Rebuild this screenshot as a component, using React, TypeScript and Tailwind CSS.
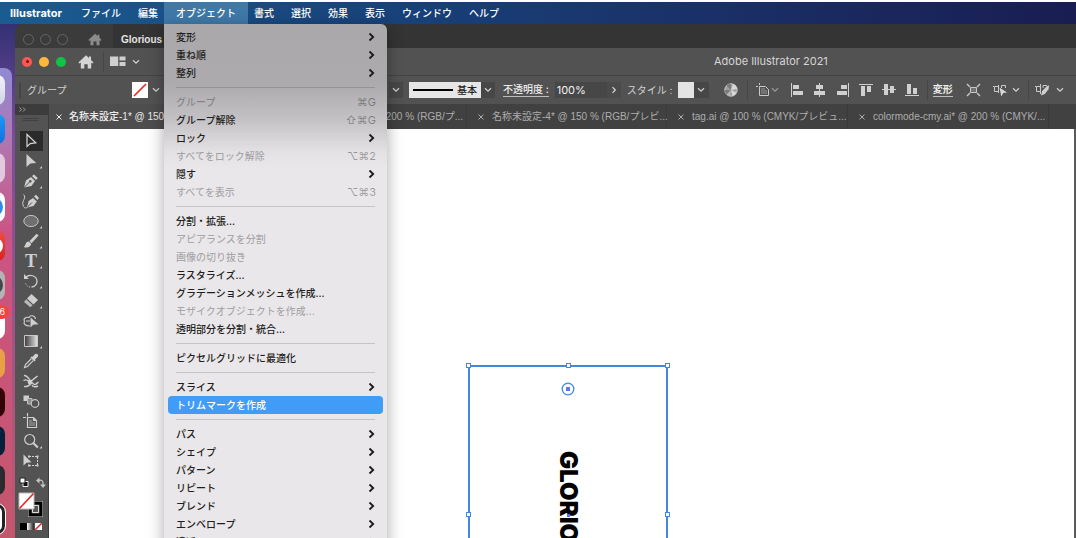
import type { ReactNode } from "react";
import clsx from "clsx";

type MenuEntry = {
  label: string;
  submenu?: boolean;
  disabled?: boolean;
  keys?: string;
  active?: boolean;
};

const menuBefore = ["ファイル", "編集"];
const menuAfter = ["書式", "選択", "効果", "表示", "ウィンドウ", "ヘルプ"];

const menuGroups: MenuEntry[][] = [
  [
    { label: "変形", submenu: true },
    { label: "重ね順", submenu: true },
    { label: "整列", submenu: true },
  ],
  [
    { label: "グループ", disabled: true, keys: "⌘G" },
    { label: "グループ解除", keys: "⇧⌘G" },
    { label: "ロック", submenu: true },
    { label: "すべてをロック解除", disabled: true, keys: "⌥⌘2" },
    { label: "隠す", submenu: true },
    { label: "すべてを表示", disabled: true, keys: "⌥⌘3" },
  ],
  [
    { label: "分割・拡張..." },
    { label: "アピアランスを分割", disabled: true },
    { label: "画像の切り抜き", disabled: true },
    { label: "ラスタライズ..." },
    { label: "グラデーションメッシュを作成..." },
    { label: "モザイクオブジェクトを作成...", disabled: true },
    { label: "透明部分を分割・統合..." },
  ],
  [{ label: "ピクセルグリッドに最適化" }],
  [
    { label: "スライス", submenu: true },
    { label: "トリムマークを作成", active: true },
  ],
  [
    { label: "パス", submenu: true },
    { label: "シェイプ", submenu: true },
    { label: "パターン", submenu: true },
    { label: "リピート", submenu: true },
    { label: "ブレンド", submenu: true },
    { label: "エンベロープ", submenu: true },
    { label: "遠近", submenu: true },
  ],
];

function ObjectMenu() {
  return (
    <div
      role="menu"
      className="absolute top-full left-0 z-20 w-[223px] rounded-tr-md bg-[linear-gradient(180deg,#aaa8aa_0px,#acaaac_60px,#c3c1c4_95px,#e3e1e4_128px,#e9e7ea_145px)] px-1 pt-1 font-medium text-[#1f1e20] shadow-[0_4px_16px_rgba(0,0,0,0.35)]"
    >
      {menuGroups.map((group, i) => (
        <div key={i}>
          {i > 0 && <hr className="mx-2 my-[5px] border-black/15" />}
          {group.map((item) => (
            <button
              key={item.label}
              role="menuitem"
              disabled={item.disabled}
              className={clsx(
                "flex h-[18px] w-full items-center justify-between rounded pr-[7px] pl-2 whitespace-nowrap",
                item.active && "bg-[#419cf8] text-white",
                item.disabled && "text-black/30"
              )}
            >
              <span>{item.label}</span>
              {item.keys && (
                <span className="font-['Inter','DejaVu_Sans',sans-serif] text-[11px] font-normal text-black/35">
                  {item.keys}
                </span>
              )}
              {item.submenu && (
                <svg width="8" height="10" viewBox="0 0 8 10" fill="none" stroke="#1b1a1c" strokeWidth="1.8">
                  <path d="M1.5 1.5 5.2 5 1.5 8.5" />
                </svg>
              )}
            </button>
          ))}
        </div>
      ))}
    </div>
  );
}

function MenuBar() {
  return (
    <nav className="relative z-20 flex h-[22px] shrink-0 items-stretch gap-[17px] bg-linear-to-r from-[#1b5c90] via-[#183f78] via-40% to-[#191d52] pl-[10px] whitespace-nowrap text-white">
      <button className="w-[54px] text-left text-[11px] font-bold">Illustrator</button>
      {menuBefore.map((name) => (
        <button key={name} className="font-medium">{name}</button>
      ))}
      <div className="relative -mx-[11px] flex">
        <button className="bg-[#3f79a8] px-3 font-medium">オブジェクト</button>
        <ObjectMenu />
      </div>
      {menuAfter.map((name) => (
        <button key={name} className="font-medium">{name}</button>
      ))}
    </nav>
  );
}

const dockIcons: { look: string; inner?: ReactNode }[] = [
  { look: "bg-linear-to-b from-[#f4f5fa] to-[#cfd3e4]" },
  { look: "bg-linear-to-b from-[#1d9bf6] to-[#0f6fe0]" },
  { look: "bg-[#e3c9dd]" },
  { look: "bg-white", inner: <span className="size-5 rounded-full bg-[#2f8de4]" /> },
  { look: "bg-linear-to-b from-[#f04c40] to-[#d8201d]", inner: <span className="size-4 rounded-full bg-white" /> },
  { look: "bg-[#b4b4b6]", inner: <span className="size-5 rounded-full border-3 border-[#46464a] bg-[#8b8b8f]" /> },
  { look: "bg-white" },
  { look: "rounded-full bg-[#e9a045]" },
  { look: "bg-[#330407]" },
  { look: "bg-[#06203c]" },
  { look: "bg-[#2b2b2d]" },
  { look: "border-3 border-[#222] bg-white outline outline-white" },
];

function Dock() {
  return (
    <aside className="w-[15px] shrink-0 overflow-hidden pt-11">
      <div className="h-full w-3 overflow-hidden rounded-tr-lg bg-linear-to-b from-[#8f8ad4] via-[#cc5484] via-35% to-[#c4566c] pt-[7px]">
        <div className="-ml-[27px] flex w-8 flex-col gap-[9px]">
          {dockIcons.map((icon, i) => (
            <div
              key={i}
              className={clsx("relative flex h-[30px] items-center justify-end rounded-lg pr-[2px]", icon.look)}
            >
              {icon.inner}
              {i === 6 && (
                <span className="absolute -top-1 -right-1 flex h-3.5 w-5 items-center justify-end rounded-full bg-[#f8413c] pr-1 text-[9px] text-white">
                  6
                </span>
              )}
            </div>
          ))}
        </div>
      </div>
    </aside>
  );
}

function Chevron({ color = "#cfcfcf" }: { color?: string }) {
  return (
    <svg width="8" height="6" viewBox="0 0 8 6" fill="none" stroke={color} strokeWidth="1.3">
      <path d="M1 1.3 4 4.2 7 1.3" />
    </svg>
  );
}

function HomeIcon({ className }: { className: string }) {
  return (
    <svg viewBox="0 0 16 14" fill="currentColor" className={className}>
      <path d="M8 .3.4 7.6 1.5 8.6 2.8 7.5V13.6H6.3V9.2H9.7V13.6H13.2V7.5L14.5 8.6 15.6 7.6 13 5.1V1.6H11V3.1Z" />
    </svg>
  );
}

function Divider() {
  return <span className="h-5 w-px bg-[#464646]" />;
}

function BackTitleBar() {
  return (
    <div className="flex h-6 items-stretch rounded-tl-lg bg-[#343434]">
      <div className="flex w-[98px] items-center rounded-tl-lg bg-[#3b3b3b] pt-[6px] pl-2">
        <div className="flex gap-[6px]">
          <span className="size-[11px] rounded-full border border-[#666]" />
          <span className="size-[11px] rounded-full border border-[#666]" />
          <span className="size-[11px] rounded-full border border-[#666]" />
        </div>
        <HomeIcon className="ml-5 h-[13px] w-[14px] text-[#8b8b8b]" />
      </div>
      <div className="flex items-center pt-[6px] pl-2 font-['Liberation_Sans',sans-serif] font-bold text-[#e6e6e6]">
        Glorious
      </div>
    </div>
  );
}

function TitleBar() {
  return (
    <header className="flex h-7 items-center border-b border-[#454545] bg-[#525252]">
      <div className="flex w-[699px] shrink-0 items-center pl-[7px]">
        <div className="flex gap-[7px]">
          <button aria-label="閉じる" className="flex size-[10px] items-center justify-center rounded-full bg-[#fc5753]">
            <span className="size-[3px] rounded-full bg-[#7d0d0a]" />
          </button>
          <button aria-label="しまう" className="size-[10px] rounded-full bg-[#fdb93c]" />
          <button aria-label="拡大" className="size-[10px] rounded-full bg-[#10c344]" />
        </div>
        <button aria-label="ホーム" className="ml-3 text-[#d4d4d4]">
          <HomeIcon className="h-[14px] w-4" />
        </button>
        <span className="ml-[9px] h-5 w-px bg-[#464646]" />
        <button aria-label="ワークスペース" className="ml-[6px] flex items-center gap-[6px]">
          <svg width="16" height="11" viewBox="0 0 16 11" fill="#cfcfcf">
            <path d="M0 .5H8.2V10H0ZM9.5.5H15.5V4.6H9.5ZM9.5 5.9H15.5V10H9.5Z" />
          </svg>
          <Chevron />
        </button>
      </div>
      <h1 className="text-[11px] whitespace-nowrap text-[#d6d6d6]">Adobe Illustrator 2021</h1>
    </header>
  );
}

const alignIcons = [
  { name: "左揃え", d: "M1 0V14H2V0ZM3 2H9V6H3ZM3 8H13V12H3Z" },
  { name: "水平中央", d: "M6 0H7V2H10V6H7V8H12V12H7V14H6V12H1V8H6V6H3V2H6Z" },
  { name: "右揃え", d: "M12 0H13V14H12ZM5 2H11V6H5ZM1 8H11V12H1Z" },
  { name: "上揃え", d: "M0 1H14V2H0ZM2 3H6V13H2ZM8 3H12V9H8Z" },
  { name: "垂直中央", d: "M0 6H2V1H6V6H8V3H12V6H14V7H12V10H8V7H6V12H2V7H0Z" },
  { name: "下揃え", d: "M0 12H14V13H0ZM2 1H6V11H2ZM8 5H12V11H8Z" },
];

function ControlBar() {
  return (
    <div className="flex h-7 items-center overflow-hidden bg-[#525252] whitespace-nowrap text-[#cfcfcf]">
      <span className="ml-1 h-4 w-[2px] shrink-0 bg-[#454545]" />
      <span className="ml-[6px] w-[105px] shrink-0">グループ</span>
      <button aria-label="塗り" className="flex shrink-0 items-center gap-1">
        <svg width="16" height="16" viewBox="0 0 16 16">
          <path d="M0 0H16V16H0Z" fill="#fff" />
          <path d="M2 14 14 2" stroke="#e0302c" strokeWidth="1.7" />
        </svg>
        <Chevron />
      </button>
      <span className="w-[229px] shrink-0" />
      <button aria-label="線幅" className="flex h-4 w-[14px] shrink-0 items-center justify-center bg-[#474747]">
        <Chevron />
      </button>
      <button className="ml-[6px] flex h-4 w-[72px] shrink-0 items-center gap-1 bg-[#e6e6e6] pl-1 font-medium text-[#222]">
        <span className="h-[2px] w-10 bg-black" />
        基本
      </button>
      <button aria-label="ブラシ定義" className="flex h-4 w-[14px] shrink-0 items-center justify-center bg-[#474747]">
        <Chevron />
      </button>
      <label htmlFor="opacity" className="ml-2 shrink-0 border-b border-[#bdbdbd] leading-[13px] font-medium text-[#ececec]">
        不透明度 :
      </label>
      <input
        id="opacity"
        defaultValue="100%"
        className="ml-[6px] h-4 w-[52px] shrink-0 bg-[#474747] pl-[2px] text-[11px] text-[#f2f2f2]"
      />
      <button aria-label="不透明度スライダー" className="flex h-4 w-[14px] shrink-0 items-center justify-center bg-[#4b4b4b]">
        <svg width="6" height="8" viewBox="0 0 6 8" fill="none" stroke="#d8d8d8" strokeWidth="1.2">
          <path d="M1.5 1.2 4.3 4 1.5 6.8" />
        </svg>
      </button>
      <span className="ml-[6px] w-[51px] shrink-0">スタイル :</span>
      <button aria-label="グラフィックスタイル" className="flex shrink-0 items-center bg-[#474747]">
        <span className="size-4 bg-[#e3e3e3]" />
        <span className="flex w-[15px] justify-center">
          <Chevron />
        </span>
      </button>
      <button aria-label="オブジェクトを再配色" className="ml-[15px] shrink-0">
        <svg width="14" height="14" viewBox="0 0 14 14">
          <circle cx="7" cy="7" r="6.2" fill="#a0a0a0" stroke="#cdcdcd" />
          <path d="M7 7 2.5 2.6A6.2 6.2 0 0 1 7 .8ZM7 7H.9A6.2 6.2 0 0 0 2.6 11.4Z" fill="#7a7a7a" />
          <path d="M7 7 9 1.1A6.2 6.2 0 0 1 13 6ZM7 7 12.6 9.5A6.2 6.2 0 0 1 8.5 13Z" fill="#d8d8d8" />
          <path d="M7 7 6 13.1A6.2 6.2 0 0 1 2.6 11.4Z" fill="#b5b5b5" />
        </svg>
      </button>
      <div className="ml-[9px] flex shrink-0 items-center gap-2">
        <Divider />
        <button aria-label="整列の基準" className="flex items-center gap-px">
          <svg width="14" height="14" viewBox="0 0 14 14" fill="none" stroke="#c9c9c9">
            <path d="M3.5 3.5H9.5L12.5 6.5V12.5H3.5ZM0 3.5H2M3.5 0V2" />
            <path d="M5 5H9V7H11V11H5Z" fill="#737373" stroke="none" />
          </svg>
          <Chevron color="#9a9a9a" />
        </button>
      </div>
      <div className="ml-[11px] flex shrink-0 items-center gap-[9px]">
        {alignIcons.map((icon) => (
          <button key={icon.name} aria-label={icon.name}>
            <svg width="14" height="14" viewBox="0 0 14 14" fill="#d0d0d0">
              <path d={icon.d} />
            </svg>
          </button>
        ))}
      </div>
      <div className="ml-2 flex shrink-0 items-center gap-[5px]">
        <Divider />
        <button className="border-b border-[#bdbdbd] leading-[13px] font-bold text-[#ececec]">変形</button>
      </div>
      <button aria-label="選択オブジェクトを編集" className="ml-[13px] shrink-0">
        <svg width="15" height="14" viewBox="0 0 15 14" fill="none" stroke="#c9c9c9">
          <path d="M4.5 4.5H10.5V9.5H4.5Z" fill="#737373" />
          <path d="M1 1 4 4M14 1 11 4M1 13 4 10M14 13 11 10" strokeWidth="1.4" />
        </svg>
      </button>
      <button aria-label="類似オブジェクトを選択" className="ml-3 flex shrink-0 items-center gap-1">
        <svg width="15" height="14" viewBox="0 0 15 14" fill="none" stroke="#c9c9c9">
          <path d="M1.5 3.5H5.5V8.5H1.5ZM8.5 5V2.5H12.5V5M0 3.5H1M5.5 2V10" />
          <path d="M6.5 4.5 14 9.5 10.3 10 8.3 13.4Z" fill="#d6d6d6" stroke="none" />
        </svg>
        <Chevron />
      </button>
      <span className="ml-2 h-5 w-px shrink-0 bg-[#464646]" />
      <button aria-label="描画モード" className="ml-[6px] flex shrink-0 items-center gap-[6px]">
        <svg width="15" height="14" viewBox="0 0 15 14" fill="none" stroke="#c9c9c9">
          <path d="M1.5 3.5H5.5V8.5H1.5ZM8 5V2.5H12M0 3.5H1M5.5 1V11" />
          <path d="M6 12.5 7.2 8 11.5 3.5 14.2 2.2 13.5 6.2 9.8 11Z" fill="#d0d0d0" stroke="none" />
        </svg>
        <Chevron />
      </button>
    </div>
  );
}

const tabs = [
  { title: "名称未設定-1* @ 150", size: "w-[206px] pl-[7px] gap-[7px]", current: true },
  { title: "200 % (RGB/プ...", size: "w-[212px] justify-end pr-[3px] gap-2" },
  { title: "名称未設定-4* @ 150 % (RGB/プレビ...", size: "w-[200px] pl-[11px] gap-2" },
  { title: "tag.ai @ 100 % (CMYK/プレビュ...", size: "w-[181px] pl-[11px] gap-2" },
  { title: "colormode-cmy.ai* @ 200 % (CMYK/...", size: "w-[201px] pl-[11px] gap-2" },
];

function Tabs() {
  return (
    <div
      role="tablist"
      className="flex h-[25px] shrink-0 overflow-hidden bg-[#414141] font-['Liberation_Sans','Noto_Sans_CJK_JP',sans-serif]"
    >
      {tabs.map((tab) => (
        <div
          key={tab.title}
          className={clsx(
            "flex shrink-0 items-center border-r border-[#3a3a3a] whitespace-nowrap",
            tab.size,
            tab.current ? "bg-[#4e4e4e] text-[#ececec]" : "text-[#adadad]"
          )}
        >
          <button aria-label="タブを閉じる">
            <svg width="6" height="6" viewBox="0 0 6 6" stroke="currentColor">
              <path d="M.5.5 5.5 5.5M5.5.5.5 5.5" />
            </svg>
          </button>
          <button role="tab" aria-selected={!!tab.current} className={clsx(tab.current && "font-medium")}>
            {tab.title}
          </button>
        </div>
      ))}
    </div>
  );
}

const tools: { name: string; icon: ReactNode; more?: boolean }[] = [
  { name: "選択", icon: <path d="M6 3.5V15.5L9.3 12.6 14.8 11.8Z" fill="none" stroke="#d6d6d6" strokeWidth="1.2" /> },
  { name: "ダイレクト選択", icon: <path d="M5.5 3V16L9.3 12.6 15.2 12Z" />, more: true },
  {
    name: "ペン",
    more: true,
    icon: (
      <>
        <path d="M3 16.5 5 9.5 10 6 14 10 10.5 15Z" />
        <path d="M11 5 13 3.5 16.8 7 15 9Z" />
        <path d="M3 16.5 9 10.6" stroke="#535353" />
        <circle cx="9.3" cy="10.3" r="1.2" fill="#535353" />
      </>
    ),
  },
  {
    name: "曲線",
    icon: (
      <>
        <path d="M6 16.5 7.6 10 12 7 15.8 10.6 12.5 15Z" />
        <path d="M13 5.5 15 3.8 18 7 16.4 9Z" />
        <path d="M6 16.5 11 11.4" stroke="#535353" />
        <path d="M2.5 3.5C6 7 .5 9.5 2 14S5.5 17 7 15.5" fill="none" stroke="#cfcfcf" />
      </>
    ),
  },
  { name: "楕円形", icon: <ellipse cx="10" cy="10" rx="7.2" ry="5.6" fill="#6f6f6f" stroke="#c4c4c4" />, more: true },
  {
    name: "ブラシ",
    more: true,
    icon: (
      <>
        <path d="M15.6 2.8 17.6 4.6 10.6 12.2 8.4 10.2Z" />
        <path d="M7.6 10.6 10.2 12.8C9.6 16.5 6 17.2 2.6 16 5 15 4 11 7.6 10.6Z" />
      </>
    ),
  },
  {
    name: "文字",
    more: true,
    icon: (
      <text x="10" y="16" textAnchor="middle" fontSize="18" fontFamily="Liberation Serif, serif" fontWeight="bold">
        T
      </text>
    ),
  },
  {
    name: "回転",
    more: true,
    icon: (
      <>
        <path d="M5 6.5C8 2.5 16 4.5 16 10.5 16 14 13 16 10.5 16" fill="none" stroke="#cfcfcf" strokeWidth="1.3" />
        <path d="M9 16C6 15.5 4.5 13.5 4 11" fill="none" stroke="#cfcfcf" strokeDasharray="1 1.5" />
        <path d="M3 3V8H7.8Z" />
      </>
    ),
  },
  {
    name: "消しゴム",
    more: true,
    icon: (
      <>
        <path d="M10.5 3 17 9 12.4 13.4 6 7.4Z" />
        <path d="M5.2 8.2 11.6 14.2 9.3 16.2 3 11Z" fill="#b8b8b8" />
      </>
    ),
  },
  {
    name: "シェイプ形成",
    icon: (
      <>
        <path d="M9 15C4 15 2 12.5 3.5 10.5 2 7.5 5 5.5 8 6.5 9 3.5 14 4.5 14.5 8" fill="none" stroke="#cfcfcf" strokeWidth="1.1" />
        <path d="M5 10H9" fill="none" stroke="#cfcfcf" />
        <path d="M9.5 6.5V16.5L12.2 13.8 17.5 13.2Z" />
      </>
    ),
  },
  { name: "グラデーション", icon: <path d="M3.5 4.5H16.5V15.5H3.5Z" fill="url(#toolGradient)" stroke="#c9c9c9" />, more: true },
  {
    name: "スポイト",
    icon: (
      <>
        <path d="M11.2 6 14.2 3C16 2 17.8 4 17 5.6L14 8.8 14.6 9.6 13.4 10.6 9.4 6.6 10.4 5.4Z" />
        <path d="M10.3 7.8 4.5 13.5 3.5 16.5 6.5 15.5 12.2 9.7" fill="none" stroke="#cfcfcf" strokeWidth="1.2" />
      </>
    ),
  },
  {
    name: "パペットワープ",
    icon: (
      <>
        <path d="M3 4.5C6 4 6.5 7 9 8.5M2.5 9.5C5 8 6.5 9 8 10.5M3 15.5C6 16 8 15 10 12.5 12 10.5 12 14 14 13.5 16 13 16 11 17.5 11.5M11 14C12 16.5 15 16 17 15" fill="none" stroke="#cfcfcf" strokeWidth="1.4" />
        <path d="M9 11 16.5 5" stroke="#cfcfcf" strokeWidth="1.6" />
        <circle cx="9" cy="11" r="2.4" />
      </>
    ),
  },
  {
    name: "ブレンド",
    icon: (
      <>
        <path d="M2.5 4.5H8V10H2.5Z" />
        <path d="M6.5 7.5H11V13H6.5Z" fill="#8d8d8d" stroke="#bdbdbd" />
        <circle cx="14" cy="12.5" r="3.8" fill="#535353" stroke="#c9c9c9" strokeWidth="1.2" />
      </>
    ),
  },
  {
    name: "アートボード",
    icon: (
      <>
        <path d="M6.5 6.5H12.5L15.5 9.5V16.5H6.5ZM2 6.5H5M6.5 2V5.5M12.5 6.5V9.5H15.5" fill="none" stroke="#cfcfcf" strokeWidth="1.2" />
        <path d="M8 8.5H11V11H14V15H8Z" fill="#7c7c7c" />
      </>
    ),
  },
  {
    name: "ズーム",
    more: true,
    icon: (
      <>
        <circle cx="8.7" cy="8.5" r="5" fill="none" stroke="#cfcfcf" strokeWidth="1.2" />
        <path d="M12.3 12 16.8 16.5" stroke="#cfcfcf" strokeWidth="2" />
      </>
    ),
  },
  {
    name: "自由変形",
    icon: (
      <>
        <path d="M8 5.5H16.5V14.5H7" fill="none" stroke="#cfcfcf" strokeDasharray="2 1" />
        <path d="M7 4.5H9V6.5H7ZM15.5 4.5H17.5V6.5H15.5ZM15.5 13.5H17.5V15.5H15.5ZM7 13.5H9V15.5H7Z" />
        <path d="M2.5 3.5V14.5L5.6 11.8 10.5 11.2Z" />
      </>
    ),
  },
];

function Toolbox() {
  return (
    <aside className="flex w-[34px] shrink-0 flex-col border-r border-[#3c3c3c] bg-[#535353]">
      <div className="h-[11px] bg-[#3c3c3c] pt-[3px] pl-1">
        <svg width="7" height="5" viewBox="0 0 7 5" fill="none" stroke="#a5a5a5">
          <path d="M.5.5 2.5 2.5.5 4.5M4 .5 6 2.5 4 4.5" />
        </svg>
      </div>
      <div className="mt-[3px] mb-[10px] ml-2 h-[3px] w-4 border-y border-[#414141]" />
      <div className="flex flex-col px-[5px]">
        {tools.map((tool, i) => (
          <button key={tool.name} aria-label={tool.name} className={clsx("h-5", i === 0 && "bg-[#2b2b2b]")}>
            <svg width="24" height="20" viewBox="-1 0 24 20" fill="#cfcfcf">
              <g>{tool.icon}</g>
              {tool.more && <path d="M21 15V17.5H18.5Z" />}
            </svg>
          </button>
        ))}
      </div>
      <svg width="34" height="62" viewBox="0 -1 34 62" className="shrink-0">
        <defs>
          <linearGradient id="toolGradient">
            <stop offset="0" stopColor="#3a3a3a" />
            <stop offset="1" stopColor="#e6e6e6" />
          </linearGradient>
          <linearGradient id="chipGradient">
            <stop offset="0" stopColor="#fff" />
            <stop offset="1" stopColor="#222" />
          </linearGradient>
        </defs>
        <path d="M8 9.5H13V14.5H8Z" fill="#111" stroke="#eee" />
        <path d="M5 6H10V11H5Z" fill="#fff" stroke="#222" />
        <path d="M23 8.5C27 7.5 28.5 9 28 13" fill="none" stroke="#c4c4c4" strokeWidth="1.3" />
        <path d="M24.5 5.5V11.5L21 8.5ZM25 12.5H31L28 16Z" fill="#c4c4c4" />
        <path d="M13 29H28V45H13Z" fill="#ddd" />
        <path d="M15 31H26V43H15Z" fill="#535353" stroke="#000" strokeWidth="3" />
        <path d="M17.5 33.5H23.5V40.5H17.5Z" fill="none" stroke="#ddd" />
        <path d="M4 21H19V37H4Z" fill="#fff" stroke="#bbb" />
        <path d="M4.5 36.5 18.5 21.5" stroke="#e0302c" strokeWidth="1.8" />
        <path d="M5 51H12V58H5Z" fill="#000" />
        <path d="M12 51H19V58H12Z" fill="url(#chipGradient)" />
        <path d="M20 51H27V58H20Z" fill="#fff" />
        <path d="M20 58 27 51" stroke="#e0302c" strokeWidth="1.6" />
      </svg>
    </aside>
  );
}

function Handle({ place }: { place: string }) {
  return <span className={clsx("absolute size-[5px] border border-[#3d8ae0] bg-white", place)} />;
}

function Canvas() {
  return (
    <main className="relative flex-1 overflow-hidden border-r-2 border-[#5a5a5a] bg-white">
      <div className="absolute top-[236px] left-[419px] h-[300px] w-[200px] border-2 border-[#3d8ae0]">
        <Handle place="-top-[4px] -left-[4px]" />
        <Handle place="-top-[4px] left-[96px]" />
        <Handle place="-top-[4px] -right-[4px]" />
        <Handle place="top-[145px] -left-[4px]" />
        <Handle place="top-[145px] -right-[4px]" />
        <svg width="14" height="14" viewBox="0 0 14 14" className="absolute top-[15px] left-[91px]">
          <circle cx="7" cy="7" r="5.8" fill="#fff" stroke="#3d8ae0" strokeWidth="1.3" />
          <path d="M5 5H9V9H5Z" fill="#5a78f0" />
        </svg>
        <p className="absolute top-[84px] left-[82px] font-['Inter',sans-serif] text-[24px] leading-[32px] font-black text-black [writing-mode:vertical-rl]">
          GLORIOUS
        </p>
        <span className="absolute top-[147px] left-[97px] size-[3px] bg-[#4a78e8]" />
      </div>
    </main>
  );
}

export default function App() {
  return (
    <div
      lang="ja"
      className="flex h-screen flex-col overflow-hidden border-t-2 border-white bg-linear-to-b from-[#262b6c] via-[#7a4c9c] via-25% to-[#c4566c] font-['Inter','Noto_Sans_CJK_JP',sans-serif] text-[10px]"
    >
      <MenuBar />
      <div className="flex min-h-0 flex-1">
        <Dock />
        <div className="flex min-w-0 flex-1 flex-col">
          <BackTitleBar />
          <TitleBar />
          <ControlBar />
          <div className="flex min-h-0 flex-1">
            <Toolbox />
            <div className="flex min-w-0 flex-1 flex-col">
              <Tabs />
              <Canvas />
            </div>
          </div>
        </div>
      </div>
    </div>
  );
}
